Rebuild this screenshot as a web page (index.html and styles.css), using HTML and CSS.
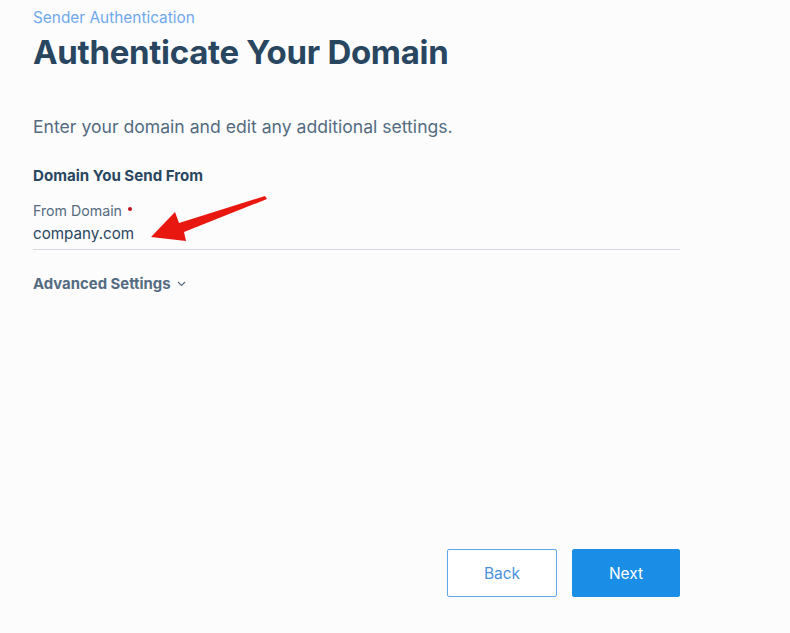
FILE: index.html
```html
<!DOCTYPE html>
<html lang="en">
<head>
  <meta charset="UTF-8">
  <meta name="viewport" content="width=device-width, initial-scale=1.0">
  <title>Authenticate Your Domain</title>
  <link rel="stylesheet" href="styles.css">
</head>
<body>

  <div class="page">
    <p class="crumb">Sender Authentication</p>
    <h1 class="title">Authenticate Your Domain</h1>

    <p class="intro">Enter your domain and edit any additional settings.</p>

    <h3 class="section-title">Domain You Send From</h3>

    <div class="field">
      <label for="from-domain">From Domain <span class="required"></span></label>
      <input type="text" id="from-domain" value="company.com">
    </div>

    <button class="advanced" type="button">Advanced Settings
      <svg width="9" height="6" viewBox="0 0 9 6"><path d="M1 1 L4.5 4.5 L8 1" fill="none" stroke="#546b81" stroke-width="1.1"/></svg>
    </button>

    <div class="actions">
      <button type="button" class="btn btn-secondary">Back</button>
      <button type="button" class="btn btn-primary">Next</button>
    </div>

    <!-- pointer arrow on the domain field -->
    <svg class="arrow" width="120" height="50" viewBox="0 0 120 50">
      <path d="M115 1 L117 4 L34 37 L36 46 L1 42 L25 17 L29 28 Z" fill="#e8170f"/>
    </svg>
  </div>

</body>
</html>
```

FILE: styles.css
```css
* {
  margin: 0;
  padding: 0;
  box-sizing: border-box;
}

body {
  font-family: Inter, "Open Sans", sans-serif;
  background: #fcfcfc;
  color: #294661;
}

.page {
  position: relative;
  width: 647px;
  margin-left: 33px;
  padding-top: 9px;
  display: flex;
  flex-direction: column;
  min-height: 633px;
}

.crumb {
  font-size: 15.4px;
  color: #6fa8ee;
  line-height: 18px;
}

.title {
  font-size: 33px;
  font-weight: 700;
  color: #294661;
  letter-spacing: -0.3px;
  line-height: 40px;
  margin-top: 5px;
}

.intro {
  font-size: 17.6px;
  color: #546b81;
  margin-top: 44px;
  line-height: 22px;
}

.section-title {
  font-size: 15.1px;
  font-weight: 700;
  color: #294661;
  margin-top: 28px;
  line-height: 20px;
}

.field {
  margin-top: 17px;
  border-bottom: 1px solid #d4dae0;
  padding-bottom: 5px;
}

.field label {
  display: block;
  font-size: 14.2px;
  color: #546b81;
  line-height: 16px;
}

.required {
  display: inline-block;
  width: 4px;
  height: 4px;
  border-radius: 50%;
  background: #c0101a;
  vertical-align: 5px;
  margin-left: 2px;
}

.field input {
  display: block;
  width: 100%;
  border: none;
  background: transparent;
  font-family: inherit;
  font-size: 15.2px;
  color: #294661;
  margin-top: 5px;
  line-height: 20px;
  outline: none;
}

.arrow {
  position: absolute;
  left: 117px;
  top: 195px;
}

.advanced {
  align-self: flex-start;
  border: none;
  background: none;
  font-family: inherit;
  font-size: 14.9px;
  font-weight: 700;
  color: #546b81;
  margin-top: 24px;
  display: flex;
  align-items: center;
  gap: 6px;
  line-height: 20px;
}

.actions {
  display: flex;
  justify-content: flex-end;
  gap: 15px;
  margin-top: 255px;
}

.btn {
  width: 110px;
  height: 48px;
  border-radius: 2px;
  font-family: inherit;
  font-size: 15.5px;
  cursor: pointer;
}

.btn-secondary {
  background: #fff;
  border: 1px solid #5ea6ea;
  color: #4a8fe0;
}

.btn-primary {
  width: 108px;
  background: #1a8ee6;
  border: 1px solid #1a8ee6;
  color: #fff;
}
```
